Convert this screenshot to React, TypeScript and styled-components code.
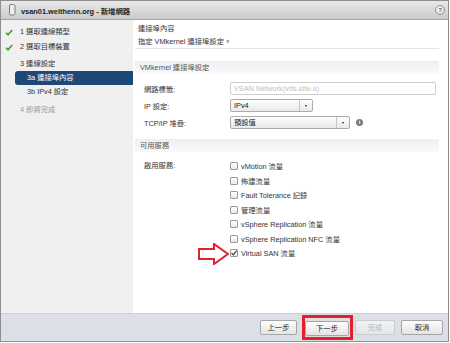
import React from 'react';
import styled, { createGlobalStyle } from 'styled-components';

const GlobalStyle = createGlobalStyle`
  html, body { margin: 0; padding: 0; background: #fff; }
  body {
    font-family: "Liberation Sans", "Noto Sans CJK TC", sans-serif;
    font-size: 7.3px;
    color: #333;
  }
`;

const Dialog = styled.div`
  width: 449px;
  height: 342px;
  box-sizing: border-box;
  border: 1px solid #8e8e8e;
  display: flex;
  flex-direction: column;
  background: #fff;
  overflow: hidden;
`;

const TitleBar = styled.div`
  height: 18px;
  flex: none;
  display: flex;
  align-items: center;
  gap: 5px;
  padding: 0 3px 0 8px;
  background: linear-gradient(#e9e9e9, #cbcbcb);
  border-bottom: 1px solid #a5a5a5;
`;

const Title = styled.div`
  flex: 1;
  font-weight: bold;
  font-size: 7.4px;
  color: #222;
`;

const HelpIcon = styled.span`
  width: 8px;
  height: 8px;
  border-radius: 50%;
  border: 1px solid #8f8f8f;
  background: radial-gradient(circle at 40% 35%, #fafafa, #d6d6d6);
  color: #555;
  font-size: 6px;
  font-weight: bold;
  line-height: 8px;
  text-align: center;
`;

const Body = styled.div`
  flex: 1;
  min-height: 0;
  display: flex;
`;

const Nav = styled.div`
  width: 132px;
  flex: none;
  background: #f0f0f0;
  padding-top: 5px;
  box-sizing: border-box;
`;

const NavItem = styled.div<{ $sub?: boolean; $selected?: boolean; $muted?: boolean; $gap?: number }>`
  height: 14px;
  line-height: 14px;
  display: flex;
  align-items: center;
  margin-top: ${p => p.$gap || 0}px;
  margin-left: ${p => (p.$sub ? 14 : 0)}px;
  padding-left: ${p => (p.$sub ? 12 : 4)}px;
  border-radius: 3px 0 0 3px;
  background: ${p => (p.$selected ? '#1e4878' : 'transparent')};
  color: ${p => (p.$selected ? '#fff' : p.$muted ? '#9a9a9a' : '#333')};
  white-space: nowrap;
`;

const CheckSlot = styled.span`
  width: 15px;
  flex: none;
  display: flex;
  align-items: center;
`;

const Content = styled.div`
  flex: 1;
  min-width: 0;
  padding: 0 9px 0 2px;
`;

const Header = styled.div`
  padding: 2px 0 0 3px;
  border-bottom: 1px solid #e4e4e4;
  line-height: 13px;
`;

const Band = styled.div<{ $top: number }>`
  margin-top: ${p => p.$top}px;
  height: 13px;
  line-height: 13px;
  padding-left: 5px;
  color: #555;
  background: linear-gradient(#efeff2, #f9f9fa);
`;

const FormRow = styled.div<{ $top?: number }>`
  display: grid;
  grid-template-columns: 86px 1fr;
  align-items: center;
  height: 17px;
  padding-left: 9px;
  margin-top: ${p => p.$top || 0}px;
`;

const TextInput = styled.div`
  width: 206px;
  height: 13px;
  box-sizing: border-box;
  border: 1px solid #cfcfcf;
  border-radius: 2px;
  padding-left: 3px;
  line-height: 11px;
  color: #c0c0c0;
`;

const SelectRow = styled.div`
  display: flex;
  align-items: center;
  gap: 6px;
`;

const Select = styled.div<{ $w: number }>`
  width: ${p => p.$w}px;
  height: 13px;
  box-sizing: border-box;
  border: 1px solid #ababab;
  border-radius: 2px;
  background: linear-gradient(#fefefe, #e9e9e9);
  display: flex;
  line-height: 11px;
  color: #222;
`;

const SelectValue = styled.span`
  flex: 1;
  padding-left: 3px;
`;

const SelectArrow = styled.span`
  width: 12px;
  border-left: 1px solid #c6c6c6;
  display: flex;
  align-items: center;
  justify-content: center;
  &::after {
    content: '';
    border-left: 1.5px solid transparent;
    border-right: 1.5px solid transparent;
    border-top: 2px solid #222;
  }
`;

const InfoIcon = styled.span`
  width: 7px;
  height: 7px;
  border-radius: 50%;
  background: #7a7a7a;
  color: #fff;
  font-size: 5.5px;
  font-weight: bold;
  line-height: 7px;
  text-align: center;
`;

const ServiceGrid = styled.div`
  display: grid;
  grid-template-columns: 86px 1fr;
  padding-left: 9px;
  margin-top: 7px;
`;

const ServiceLabel = styled.div`
  height: 14.5px;
  line-height: 14.5px;
`;

const ServiceItem = styled.div`
  position: relative;
  height: 14.5px;
  display: flex;
  align-items: center;
  gap: 3px;
  color: #333;
`;

const Box = styled.span`
  width: 8px;
  height: 8px;
  box-sizing: border-box;
  border: 1px solid #9a9a9a;
  border-radius: 1px;
  background: linear-gradient(#ffffff, #e8e8e8);
  display: flex;
  align-items: center;
  justify-content: center;
`;

const Arrow = styled.svg`
  position: absolute;
  left: -32px;
  top: -3px;
`;

const Footer = styled.div`
  height: 27px;
  flex: none;
  border-top: 1px solid #cdd0d7;
  background: #dcdfe6;
  display: flex;
  align-items: center;
  justify-content: flex-end;
  padding-right: 5px;
`;

const Button = styled.div<{ $w: number; $disabled?: boolean; $ml?: number }>`
  width: ${p => p.$w}px;
  height: 15px;
  box-sizing: border-box;
  margin-left: ${p => p.$ml || 0}px;
  border: 1px solid ${p => (p.$disabled ? '#c9cbd0' : '#a6a6a6')};
  border-radius: 2px;
  background: ${p => (p.$disabled ? 'linear-gradient(#f1f2f4, #e3e5e9)' : 'linear-gradient(#fdfdfd, #e4e4e4)')};
  color: ${p => (p.$disabled ? '#b8b8b8' : '#222')};
  line-height: 13px;
  text-align: center;
`;

const Highlight = styled.div<{ $ml?: number }>`
  margin-left: ${p => p.$ml || 0}px;
  border: 3px solid #e3212b;
  padding: 3px 1px 1px 0;
`;

const Check = () => (
  <svg width="8" height="7" viewBox="0 0 8 7">
    <path d="M1 3.8 L3 5.8 L7.2 1" fill="none" stroke="#4b9b2b" strokeWidth="1.6" />
  </svg>
);

const services = [
  'vMotion 流量',
  '佈建流量',
  'Fault Tolerance 記錄',
  '管理流量',
  'vSphere Replication 流量',
  'vSphere Replication NFC 流量',
];

export default function App() {
  return (
    <>
      <GlobalStyle />
      <Dialog>
        <TitleBar>
          <svg width="7" height="12" viewBox="0 0 7 12">
            <rect x="0.5" y="0.5" width="5.5" height="10.5" rx="1.5" fill="#eeeeee" stroke="#7d7d7d" />
          </svg>
          <Title>vsan01.weithenn.org - 新增網路</Title>
          <HelpIcon>?</HelpIcon>
        </TitleBar>
        <Body>
          <Nav>
            <NavItem><CheckSlot><Check /></CheckSlot>1 選取連線類型</NavItem>
            <NavItem $gap={1}><CheckSlot><Check /></CheckSlot>2 選取目標裝置</NavItem>
            <NavItem $gap={3}><CheckSlot />3 連線設定</NavItem>
            <NavItem $sub $selected>3a 連接埠內容</NavItem>
            <NavItem $sub>3b IPv4 設定</NavItem>
            <NavItem $gap={4} $muted><CheckSlot />4 即將完成</NavItem>
          </Nav>
          <Content>
            <Header>
              <div>連接埠內容</div>
              <div>指定 VMkernel 連接埠設定。</div>
            </Header>
            <Band $top={12}>VMkernel 連接埠設定</Band>
            <FormRow $top={6}>
              <span>網路標籤:</span>
              <TextInput>VSAN Network(vds-site-a)</TextInput>
            </FormRow>
            <FormRow>
              <span>IP 設定:</span>
              <Select $w={83}><SelectValue>IPv4</SelectValue><SelectArrow /></Select>
            </FormRow>
            <FormRow>
              <span>TCP/IP 堆疊:</span>
              <SelectRow>
                <Select $w={120}><SelectValue>預設值</SelectValue><SelectArrow /></Select>
                <InfoIcon>i</InfoIcon>
              </SelectRow>
            </FormRow>
            <Band $top={8}>可用服務</Band>
            <ServiceGrid>
              <ServiceLabel>啟用服務:</ServiceLabel>
              <div>
                {services.map(s => (
                  <ServiceItem key={s}><Box />{s}</ServiceItem>
                ))}
                <ServiceItem>
                  <Arrow width="31" height="22" viewBox="0 0 31 22">
                    <polygon points="1,6 16,6 16,1 30,11 16,21 16,16 1,16" fill="#fff" stroke="#e3212b" strokeWidth="2" strokeLinejoin="miter" />
                  </Arrow>
                  <Box>
                    <svg width="6" height="6" viewBox="0 0 6 6">
                      <path d="M0.6 3 L2.3 4.9 L5.6 0.6" fill="none" stroke="#333" strokeWidth="1.1" />
                    </svg>
                  </Box>
                  Virtual SAN 流量
                </ServiceItem>
              </div>
            </ServiceGrid>
          </Content>
        </Body>
        <Footer>
          <Button $w={37}>上一步</Button>
          <Highlight $ml={5}><Button $w={44}>下一步</Button></Highlight>
          <Button $w={40} $ml={2} $disabled>完成</Button>
          <Button $w={42} $ml={6}>取消</Button>
        </Footer>
      </Dialog>
    </>
  );
}
